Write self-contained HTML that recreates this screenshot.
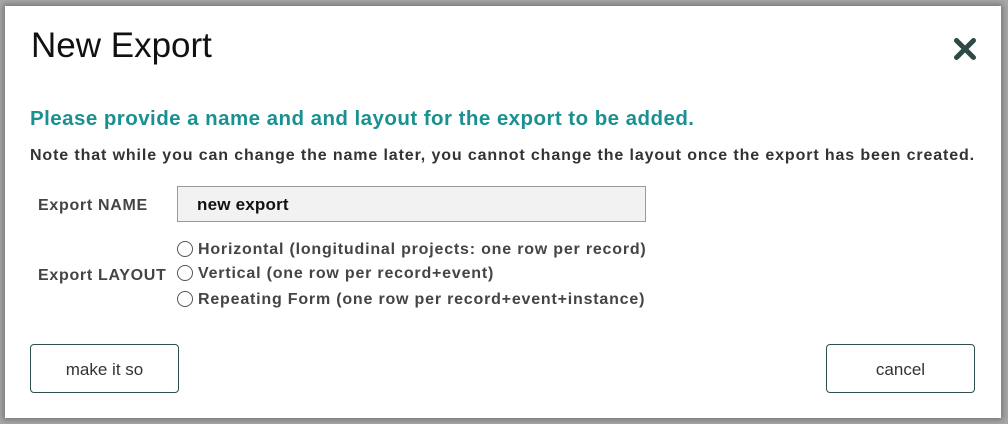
<!DOCTYPE html>
<html><head><style>
html,body{margin:0;padding:0;width:1008px;height:424px;overflow:hidden;background:#a8a8a8;font-family:"Liberation Sans",sans-serif;}
.dlg{position:absolute;left:5px;top:6px;width:996px;height:412px;background:#fff;box-shadow:0 0 6px 2px #777;}
.t{position:absolute;left:26px;top:20px;font-size:35px;color:#111;font-weight:300;letter-spacing:0px;}
.x{position:absolute;left:948px;top:31px;}
.h{position:absolute;left:25px;top:101px;font-size:20.5px;color:#1a9090;font-weight:bold;letter-spacing:0.45px;}
.n{position:absolute;left:25px;top:141px;font-size:16px;color:#333;font-weight:bold;letter-spacing:0.88px;white-space:nowrap;}
.l{position:absolute;font-size:16px;color:#444;font-weight:bold;letter-spacing:0.7px;}
.in{position:absolute;left:172px;top:180px;width:469px;height:36px;background:#f2f2f2;border:1px solid #999;box-sizing:border-box;font-size:17px;font-weight:bold;color:#111;padding:8px 0 0 19px;letter-spacing:0.2px;}
.r{position:absolute;left:172px;font-size:16px;color:#444;font-weight:bold;white-space:nowrap;letter-spacing:0.8px;}
.r i{display:inline-block;width:16px;height:16px;border:1px solid #555;border-radius:50%;vertical-align:-3px;margin-right:5px;box-sizing:border-box;}
.b{position:absolute;top:338px;width:149px;height:49px;border:1px solid #2f4f4f;border-radius:4px;box-sizing:border-box;text-align:center;line-height:49px;font-size:17px;color:#333;}
</style></head><body>
<div class="dlg">
<div class="t">New Export</div>
<svg class="x" width="24" height="24" viewBox="0 0 24 24"><path d="M3.5 3.5L20.5 20.5M20.5 3.5L3.5 20.5" stroke="#2d4a48" stroke-width="5" stroke-linecap="round"/></svg>
<div class="h">Please provide a name and and layout for the export to be added.</div>
<div class="n">Note that while you can change the name later, you cannot change the layout once the export has been created.</div>
<div class="l" style="left:33px;top:191px">Export NAME</div>
<div class="in">new export</div>
<div class="l" style="left:33px;top:261px">Export LAYOUT</div>
<div class="r" style="top:235px"><i></i>Horizontal (longitudinal projects: one row per record)</div>
<div class="r" style="top:259px"><i></i>Vertical (one row per record+event)</div>
<div class="r" style="top:285px"><i></i>Repeating Form (one row per record+event+instance)</div>
<div class="b" style="left:25px">make it so</div>
<div class="b" style="left:821px">cancel</div>
</div>
</body></html>
